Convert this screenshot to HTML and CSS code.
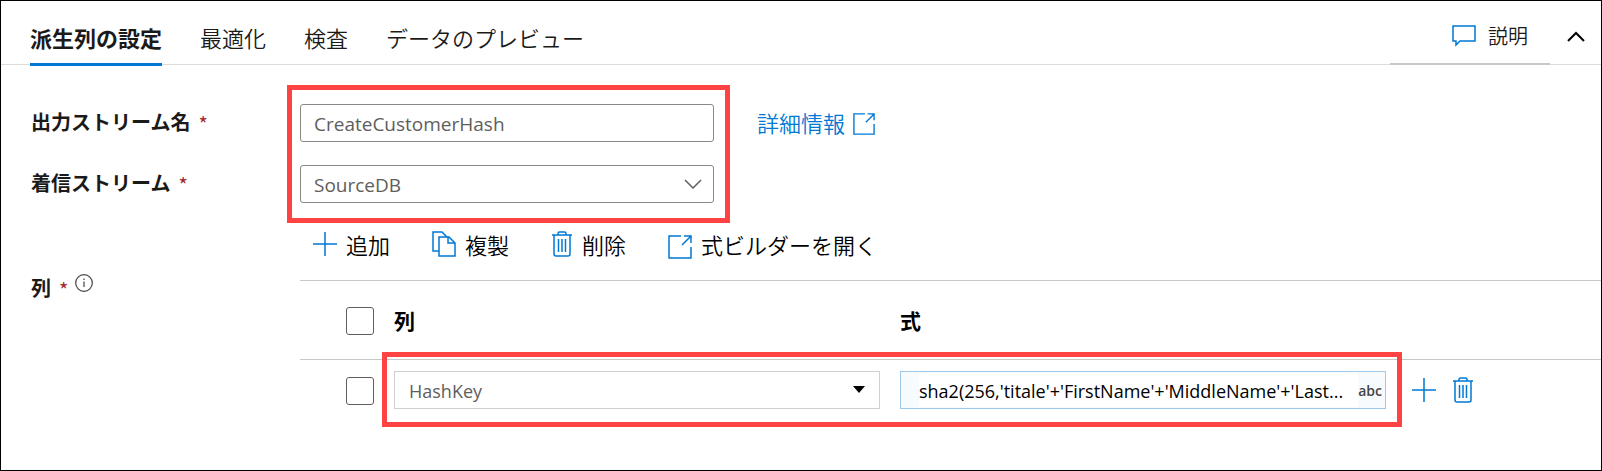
FILE: index.html
```html
<!DOCTYPE html>
<html lang="ja">
<head>
<meta charset="utf-8">
<title>派生列の設定</title>
<link rel="stylesheet" href="styles.css">
</head>
<body>
<svg class="sprite" aria-hidden="true">
  <symbol id="plus" viewBox="0 0 24 24"><path d="M12 0V24M0 12H24"/></symbol>
  <symbol id="trash" viewBox="0 0 22 26"><path d="M1 4H21M7 4V2.500Q7 1 8.500 1H13.500Q15 1 15 2.500V4M3 4V23Q3 25 5 25H17Q19 25 19 23V4M7.500 8V21M11 8V21M14.500 8V21"/></symbol>
  <symbol id="copy" viewBox="0 0 24 26"><path d="M7 20H1V1H10L15 6M7 6H17L23 12V25H7ZM16 6V12H23"/></symbol>
  <symbol id="popout" viewBox="0 0 24 24"><path d="M13 1H1V23H23V12M14 10L23 1M16 1H23V8"/></symbol>
  <symbol id="comment" viewBox="0 0 24 22"><path d="M1 1H23V16H8L4 20V16H1Z"/></symbol>
</svg>
<header class="header">
  <nav class="tabs" role="tablist">
    <button class="tab tab-active" role="tab" aria-selected="true">派生列の設定</button>
    <button class="tab" role="tab">最適化</button>
    <button class="tab" role="tab">検査</button>
    <button class="tab" role="tab">データのプレビュー</button>
  </nav>
  <button class="describe"><svg class="icon-comment"><use href="#comment"/></svg>説明</button>
  <button class="collapse" aria-label="折りたたむ"><svg class="icon-up" viewBox="0 0 18 12"><path d="M1 10L9 2L17 10"/></svg></button>
</header>
<main class="settings">
  <label class="label" for="output">出力ストリーム名<span class="required">*</span></label>
  <div class="stream">
    <input class="field" id="output" type="text" value="CreateCustomerHash">
    <a class="link" href="#">詳細情報<svg class="icon-link"><use href="#popout"/></svg></a>
    <div class="callout callout-stream"></div>
  </div>
  <label class="label" for="incoming">着信ストリーム<span class="required">*</span></label>
  <div class="picker">
    <select class="field" id="incoming"><option>SourceDB</option></select>
    <svg class="chevron" viewBox="0 0 18 10"><path d="M1 1L9 9L17 1"/></svg>
  </div>
  <div class="label label-columns">列<span class="required">*</span><svg class="icon-info" viewBox="0 0 18 18"><circle cx="9" cy="9" r="8.300"/><path d="M9 7.500V13M9 4.500V6"/></svg></div>
  <section class="columns">
    <div class="toolbar">
      <button class="command"><svg class="icon-plus"><use href="#plus"/></svg>追加</button>
      <button class="command"><svg class="icon-copy"><use href="#copy"/></svg>複製</button>
      <button class="command"><svg class="icon-trash"><use href="#trash"/></svg>削除</button>
      <button class="command"><svg class="icon-popout"><use href="#popout"/></svg>式ビルダーを開く</button>
    </div>
    <div class="grid">
      <table class="table">
        <thead>
          <tr>
            <th class="cell-check"><input class="check" type="checkbox" aria-label="すべて選択"></th>
            <th class="cell-name">列</th>
            <th class="cell-expr">式</th>
            <th class="cell-actions"></th>
          </tr>
        </thead>
        <tbody>
          <tr>
            <td class="cell-check"><input class="check" type="checkbox" aria-label="行を選択"></td>
            <td class="cell-name">
              <div class="combo">
                <select class="combo-select" aria-label="列"><option>HashKey</option></select>
                <svg class="caret" viewBox="0 0 12 7"><path d="M0 0H12L6 7Z"/></svg>
              </div>
            </td>
            <td class="cell-expr">
              <div class="expr">
                <input class="expr-input" type="text" aria-label="式" value="sha2(256,'titale'+'FirstName'+'MiddleName'+'Last...">
                <span class="type">abc</span>
              </div>
            </td>
            <td class="cell-actions">
              <div class="actions">
                <button class="action" aria-label="追加"><svg class="icon-plus"><use href="#plus"/></svg></button>
                <button class="action" aria-label="削除"><svg class="icon-trash"><use href="#trash"/></svg></button>
              </div>
            </td>
          </tr>
        </tbody>
      </table>
      <div class="callout callout-row"></div>
    </div>
  </section>
</main>
</body>
</html>
```
FILE: styles.css
```css
* { box-sizing: border-box; }

body {
  margin: 0;
  min-height: 100vh;
  border: 1px solid #000;
  background: #fff;
  color: #1b1a19;
  font: 20px/30px "Noto Sans CJK JP", "Noto Sans", sans-serif;
}

.sprite { position: absolute; width: 0; height: 0; }

svg { flex: none; fill: none; stroke: #0078d4; stroke-width: 1.500; }

button {
  padding: 0;
  border: 0;
  background: none;
  color: inherit;
  font: inherit;
}

.header {
  display: flex;
  height: 64px;
  padding-left: 29px;
  box-shadow: inset 0 -1px #dcdcdc;
}

.tabs { display: flex; flex: 1; gap: 38px; }

.tab {
  height: 65px;
  padding-top: 10px;
  border-bottom: 3px solid transparent;
  font-size: 22px;
  font-weight: 350;
}

.tab-active { border-bottom-color: #0078d4; font-weight: 700; }

.describe {
  display: flex;
  align-items: center;
  justify-content: flex-end;
  gap: 12px;
  width: 160px;
  padding: 8px 22px 0 0;
  border-bottom: 2px solid #c8c8c8;
  font-weight: 350;
}

.icon-comment { width: 24px; height: 22px; }

.collapse { width: 51px; padding-top: 4px; }

.icon-up { width: 18px; height: 12px; stroke: #000; stroke-width: 2; }

.settings {
  display: grid;
  grid-template-columns: 270px minmax(0, 1fr);
  row-gap: 23px;
  padding: 39px 0 40px 29px;
}

.label { display: flex; align-items: center; height: 36px; padding-left: 1px; font-weight: 700; }

.required { margin-left: 8px; padding-top: 3px; color: #a4262c; font-weight: 400; }

.label-columns { margin-top: 44px; }

.icon-info { width: 18px; height: 18px; margin: 0 0 10px 7px; stroke: #444; stroke-width: 1.200; }

.stream { position: relative; display: flex; align-items: center; gap: 43px; }

.field {
  display: block;
  width: 414px;
  height: 38px;
  padding: 2px 13px 0;
  appearance: none;
  border: 1px solid #8a8886;
  border-radius: 3px;
  background: #fff;
  color: #605e5c;
  font: 19px "Open Sans", sans-serif;
}

.link {
  display: flex;
  align-items: center;
  gap: 8px;
  padding-bottom: 2px;
  color: #0078d4;
  font-size: 22px;
  font-weight: 350;
  text-decoration: none;
}

.icon-link { width: 22px; height: 22px; margin-top: 4px; }

.picker { position: relative; width: 414px; }

.chevron { position: absolute; right: 12px; top: 14px; width: 18px; height: 10px; stroke: #605e5c; }

.callout { position: absolute; border: 5px solid #ff4343; pointer-events: none; }

.callout-stream { left: -13px; top: -19px; width: 443px; height: 138px; }

.callout-row { left: 82px; right: 199px; top: 72px; height: 75px; }

.columns { margin-top: -4px; }

.toolbar {
  display: flex;
  gap: 42px;
  height: 46px;
  margin-bottom: 12px;
  padding-left: 13px;
  color: #000;
}

.command { display: flex; align-items: center; gap: 9px; height: 44px; font-size: 22px; font-weight: 350; }

.icon-plus { width: 24px; height: 24px; }
.icon-copy { width: 24px; height: 26px; }
.icon-trash { width: 22px; height: 26px; }
.icon-popout { width: 24px; height: 24px; margin-top: 6px; }

.grid { position: relative; }

.table { width: 100%; table-layout: fixed; border-collapse: collapse; color: #000; }

th, td { height: 61px; padding: 0; text-align: left; border-top: 1px solid #c8c8c8; }

th { height: 79px; font-size: 21px; }

.cell-check { width: 94px; padding-top: 2px; padding-left: 46px; }
.cell-name { padding-right: 10px; }
.cell-expr { padding-left: 10px; }
.cell-actions { width: 215px; padding-left: 26px; }

.check {
  display: block;
  width: 28px;
  height: 28px;
  margin: 0;
  appearance: none;
  border: 1px solid #605e5c;
  border-radius: 3px;
}

.combo { position: relative; }

.combo-select {
  display: block;
  width: 100%;
  height: 38px;
  padding: 2px 14px 0;
  appearance: none;
  border: 1px solid #d2d0ce;
  border-radius: 0;
  background: #fff;
  color: #605e5c;
  font: 18px "Open Sans", sans-serif;
}

.caret { position: absolute; right: 15px; top: 15px; width: 12px; height: 7px; fill: #000; stroke: none; }

.expr {
  display: flex;
  align-items: center;
  height: 38px;
  padding: 0 3px 0 18px;
  border: 1px solid #a0c8e8;
  background: #f8fbfe;
}

.expr-input {
  flex: 1;
  min-width: 0;
  height: 34px;
  padding: 2px 0 0;
  border: 0;
  background: #fff;
  color: #000;
  font: 18px "Open Sans", sans-serif;
}

.type { color: #444; font: 600 14px "Open Sans", sans-serif; }

.actions { display: flex; align-items: center; gap: 16px; }

.action { display: flex; }
```
